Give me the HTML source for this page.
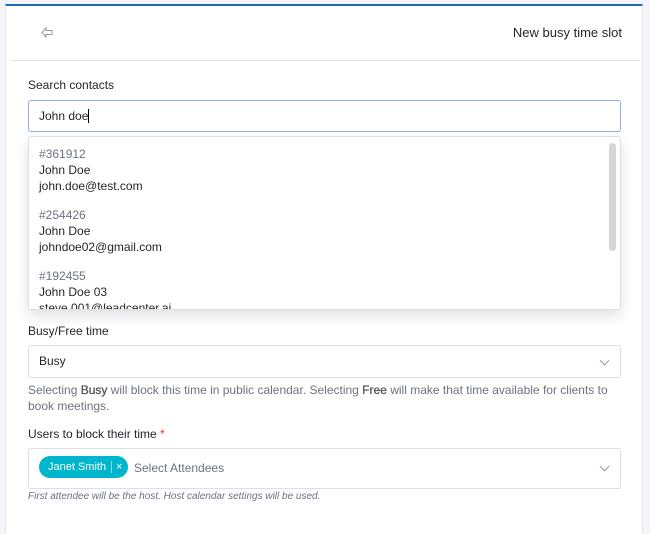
<!DOCTYPE html>
<html><head><style>
*{box-sizing:border-box;margin:0;padding:0}
body{width:650px;height:516px;background:#f3f5f9;font-family:"Liberation Sans",sans-serif;font-size:12px;color:#1f2328;position:relative;overflow:hidden}
.card{position:absolute;left:5px;top:4px;width:638px;height:530px;background:#fff;border-top:2px solid #1f6ac0;border-left:1px solid #e3e6ea;border-right:1px solid #e3e6ea}
.hline{position:absolute;left:10px;top:60px;width:630px;height:1px;background:#e2e5ea}
.abs{position:absolute}
.box{position:absolute;left:28px;width:593px;border:1px solid #dcdfe4;border-radius:3px;background:#fff}
.lbl{font-size:12px;color:#1f2328}
.grey{color:#6b7280}
.chev{position:absolute;right:12px;width:7px;height:7px;border-right:1px solid #999;border-bottom:1px solid #999;transform:rotate(45deg)}
</style></head><body>
<div class="card"></div>
<svg class="abs" style="left:41px;top:27px" width="14" height="11" viewBox="0 0 14 11"><path d="M5 1 L1 5.5 L5 10 V7.5 H11 V3.5 H5 Z" fill="none" stroke="#999" stroke-width="1"/></svg>
<div class="abs" style="right:28px;top:25px;font-size:13px;color:#1f2328">New busy time slot</div>
<div class="hline"></div>
<div class="abs lbl" style="left:28px;top:78px">Search contacts</div>
<div class="box" style="top:100px;height:32px;border-color:#8fb0dc;padding:8px 10px">John doe<span style="display:inline-block;width:1px;height:14px;background:#000;vertical-align:-3px"></span></div>
<div class="box" style="top:136px;height:174px;box-shadow:0 6px 14px rgba(0,0,0,.12);overflow:hidden">
 <div style="position:absolute;left:10px;top:9px;line-height:16px">
  <div class="grey">#361912</div><div>John Doe</div><div>john.doe@test.com</div>
  <div class="grey" style="margin-top:13px">#254426</div><div>John Doe</div><div>johndoe02@gmail.com</div>
  <div class="grey" style="margin-top:13px">#192455</div><div>John Doe 03</div><div>steve.001@leadcenter.ai</div>
 </div>
 <div style="position:absolute;left:580px;top:6px;width:7px;height:108px;background:#d6d6d6;border-radius:4px"></div>
</div>
<div class="abs lbl" style="left:28px;top:324px">Busy/Free time</div>
<div class="box" style="top:345px;height:33px;padding:8px 10px">Busy<div class="chev" style="top:11px"></div></div>
<div class="abs grey" style="left:28px;top:382px;width:600px;line-height:16px">Selecting <b style="color:#555;font-weight:normal;-webkit-text-stroke:.3px #555">Busy</b> will block this time in public calendar. Selecting <b style="color:#555;font-weight:normal;-webkit-text-stroke:.3px #555">Free</b> will make that time available for clients to book meetings.</div>
<div class="abs lbl" style="left:28px;top:427px">Users to block their time <span style="color:#e03131">*</span></div>
<div class="box" style="top:448px;height:41px">
 <div style="position:absolute;left:10px;top:7px;width:89px;height:22px;background:#00b6cc;border-radius:11px;color:#fff;font-size:11px;line-height:22px;padding-left:9px">Janet Smith<span style="position:absolute;left:72px;top:5px;width:1px;height:12px;background:rgba(255,255,255,.5)"></span><span style="position:absolute;left:77px;top:0">×</span></div>
 <div class="grey" style="position:absolute;left:105px;top:12px">Select Attendees</div>
 <div class="chev" style="top:14px"></div>
</div>
<div class="abs grey" style="left:28px;top:491px;font-size:10px;font-style:italic">First attendee will be the host. Host calendar settings will be used.</div>
</body></html>
